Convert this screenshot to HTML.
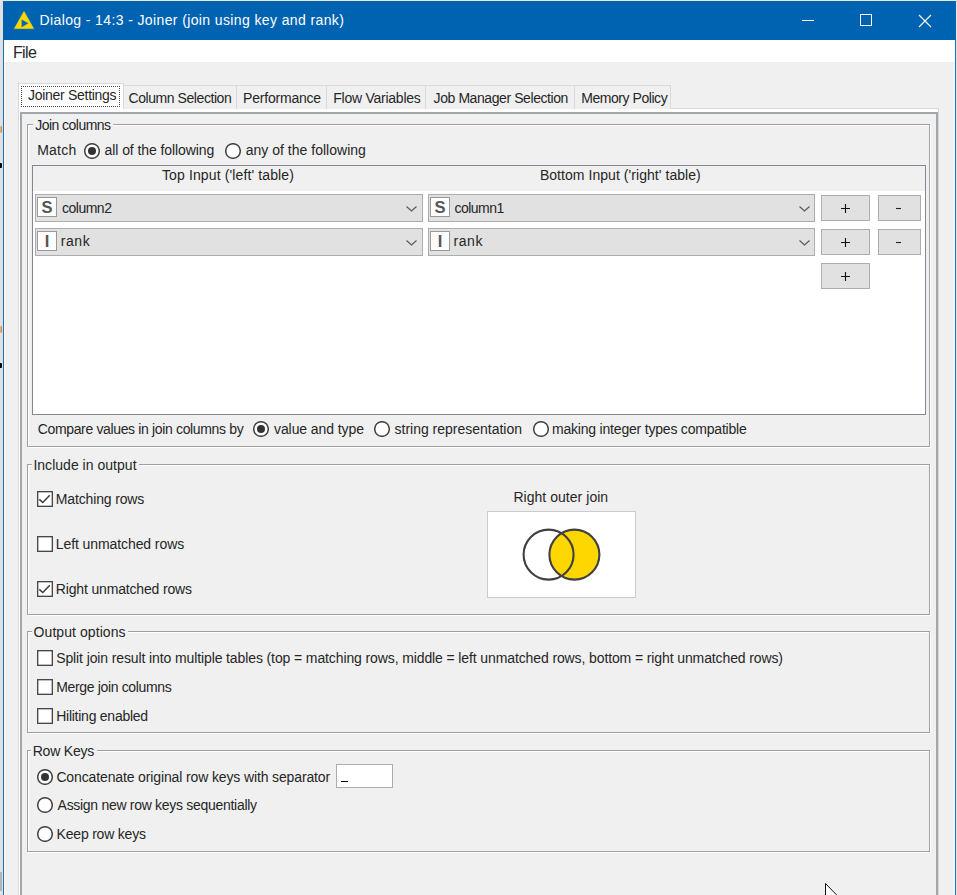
<!DOCTYPE html>
<html><head><meta charset="utf-8">
<style>
*{box-sizing:border-box;margin:0;padding:0}
html,body{width:957px;height:895px;overflow:hidden;background:#f0f0f0;font-family:"Liberation Sans",sans-serif;color:#000}
.a{position:absolute}
.t{position:absolute;white-space:pre;font-size:13.5px;line-height:16px;color:#262626;z-index:5}
#desk{left:0;top:0;width:957px;height:895px;background:#e2e2e2}
#win{left:3px;top:0;width:953px;height:895px;background:#f0f0f0;border-left:1px solid #1a6fba;border-right:1px solid #1a6fba}
#title{left:3px;top:1px;width:953px;height:39px;background:#0063b1}
#menu{left:4px;top:40px;width:951px;height:22px;background:#fff}
.tab{position:absolute;top:85px;height:24px;border:1px solid #d9d9d9;border-bottom:none;background:#f0f0f0}
.tabsel{top:83px;height:26px;background:#fff;z-index:2}
#tabc{left:18px;top:108px;width:921px;height:800px;border:1px solid #d9d9d9;background:#fff}
#inner{left:20px;top:112px;width:918px;height:800px;border:2px solid #a3a7ad;background:#f0f0f0}
.grpw{position:absolute;border:1px solid #fff}
.grp{position:absolute;border:1px solid #a0a0a0}
.gl{position:absolute;background:#f0f0f0;height:4px;z-index:1}
.radio{position:absolute;width:16px;height:16px;border-radius:50%;border:1.3px solid #333;background:#fff}
.radio.on::after{content:"";position:absolute;left:3.2px;top:3.2px;width:7px;height:7px;border-radius:50%;background:#333}
.cb{position:absolute;width:16px;height:16px;border:1.3px solid #333;background:#fff}
.combo{position:absolute;height:28px;border:1px solid #adadad;background:#e1e1e1}
.ticon{position:absolute;left:1px;top:2px;width:20px;height:20px;border:1px solid #999;background:#fff;font-weight:bold;font-size:16.5px;line-height:19px;text-align:center;color:#555}
.chev{position:absolute;top:11px;width:11px;height:6px}
.btn{position:absolute;width:49px;height:26px;border:1px solid #adadad;background:#e1e1e1;text-align:center;font-size:15px;line-height:24px;color:#000}
</style></head><body>
<div id="desk" class="a"></div>
<div id="win" class="a"></div>
<div class="a" style="left:0;top:126px;width:3px;height:7px;background:linear-gradient(90deg,#e8c9a0,#c08040 60%,#402010);border-radius:0 4px 4px 0"></div>
<div class="a" style="left:0;top:163px;width:3px;height:5px;background:#000;border-radius:0 3px 3px 0"></div>
<div class="a" style="left:0;top:326px;width:3px;height:7px;background:linear-gradient(90deg,#e8c9a0,#c08040 60%,#402010);border-radius:0 4px 4px 0"></div>
<div class="a" style="left:0;top:363px;width:3px;height:5px;background:#000;border-radius:0 3px 3px 0"></div>
<div class="a" style="left:0;top:872px;width:3px;height:19px;background:#b4b4b4"></div>
<div class="a" style="left:0;top:0;width:957px;height:1px;background:#efe8e1"></div>
<div class="a" style="left:2px;top:0;width:1px;height:895px;background:#e2ddd8"></div>
<div class="a" style="left:956px;top:0;width:1px;height:895px;background:#ece6e0"></div>
<div class="a" style="left:4px;top:40px;width:1px;height:855px;background:#fcfaf8"></div>
<div class="a" style="left:954px;top:40px;width:1px;height:855px;background:#fcfaf8"></div>
<div id="title" class="a"></div>
<div id="menu" class="a"></div>
<svg class="a" style="left:12px;top:9px" width="24" height="22" viewBox="0 0 24 22"><polygon points="12,2.6 21.6,19.6 2.4,19.6" fill="#ffd700" stroke="#ffd700" stroke-width="0.6" stroke-linejoin="round"/><polygon points="9.6,10.4 16.4,14.3 9.6,18.2" fill="#0063b1"/></svg>
<svg class="a" style="left:795px;top:8px" width="150" height="24" viewBox="0 0 150 24"><line x1="7" y1="12.5" x2="19" y2="12.5" stroke="#fff" stroke-width="1"/><rect x="65.5" y="6.5" width="11" height="11" fill="none" stroke="#fff" stroke-width="1"/><path d="M124,7 L136,19 M136,7 L124,19" stroke="#fff" stroke-width="1.1"/></svg>

<!-- tabs -->
<div id="tabc" class="a"></div>
<div class="tab" style="left:123px;width:114px"></div>
<div class="tab" style="left:236px;width:91px"></div>
<div class="tab" style="left:326px;width:100px"></div>
<div class="tab" style="left:425px;width:150px"></div>
<div class="tab" style="left:574px;width:97px"></div>
<div class="tab tabsel" style="left:18px;width:106px"></div>
<div class="a" style="left:21px;top:86px;width:99px;height:21px;border:1px dotted #4a4a4a;z-index:3"></div>
<div id="inner" class="a"></div>

<!-- group 1 -->
<div class="grpw" style="left:28px;top:125px;width:903px;height:323px"></div><div class="grp" style="left:27px;top:124px;width:903px;height:323px"></div>
<div class="gl" style="left:33px;top:122px;width:80px"></div>
<div class="a" style="left:84px;top:143px"><svg width="16" height="16" viewBox="0 0 16 16"><circle cx="8" cy="8" r="7.3" fill="#fff" stroke="#444" stroke-width="1.5"/><circle cx="8" cy="8" r="4" fill="#333"/></svg></div>
<div class="a" style="left:225px;top:143px"><svg width="16" height="16" viewBox="0 0 16 16"><circle cx="8" cy="8" r="7.3" fill="#fff" stroke="#444" stroke-width="1.5"/></svg></div>
<div class="a" style="left:32px;top:165px;width:894px;height:250px;border:1px solid #828790;background:#fff"></div>
<div class="a" style="left:33px;top:166px;width:892px;height:25px;background:#f0f0f0"></div>

<div class="combo" style="left:35px;top:194px;width:388px"><div class="ticon">S</div><svg class="chev" style="left:370px" viewBox="0 0 11 6" width="11" height="6"><path d="M0.5,0.5 L5.5,5 L10.5,0.5" fill="none" stroke="#555" stroke-width="1.05"/></svg></div>
<div class="combo" style="left:428px;top:194px;width:387px"><div class="ticon">S</div><svg class="chev" style="left:370px" viewBox="0 0 11 6" width="11" height="6"><path d="M0.5,0.5 L5.5,5 L10.5,0.5" fill="none" stroke="#555" stroke-width="1.05"/></svg></div>
<div class="combo" style="left:35px;top:228px;width:388px"><div class="ticon">I</div><svg class="chev" style="left:370px" viewBox="0 0 11 6" width="11" height="6"><path d="M0.5,0.5 L5.5,5 L10.5,0.5" fill="none" stroke="#555" stroke-width="1.05"/></svg></div>
<div class="combo" style="left:428px;top:228px;width:387px"><div class="ticon">I</div><svg class="chev" style="left:370px" viewBox="0 0 11 6" width="11" height="6"><path d="M0.5,0.5 L5.5,5 L10.5,0.5" fill="none" stroke="#555" stroke-width="1.05"/></svg></div>
<div class="btn" style="left:821px;top:195px"><svg class="a" style="left:0;top:0" width="48" height="25"><path d="M19,12.5 H28 M23.5,8 V17" stroke="#111" stroke-width="1.1"/></svg></div>
<div class="btn" style="left:878px;top:195px;width:43px"><svg class="a" style="left:0;top:0" width="42" height="25"><path d="M17,12.5 H22" stroke="#222" stroke-width="1.1"/></svg></div>
<div class="btn" style="left:821px;top:229px"><svg class="a" style="left:0;top:0" width="48" height="25"><path d="M19,12.5 H28 M23.5,8 V17" stroke="#111" stroke-width="1.1"/></svg></div>
<div class="btn" style="left:878px;top:229px;width:43px"><svg class="a" style="left:0;top:0" width="42" height="25"><path d="M17,12.5 H22" stroke="#222" stroke-width="1.1"/></svg></div>
<div class="btn" style="left:821px;top:263px"><svg class="a" style="left:0;top:0" width="48" height="25"><path d="M19,12.5 H28 M23.5,8 V17" stroke="#111" stroke-width="1.1"/></svg></div>

<div class="a" style="left:253px;top:421px"><svg width="16" height="16" viewBox="0 0 16 16"><circle cx="8" cy="8" r="7.3" fill="#fff" stroke="#444" stroke-width="1.5"/><circle cx="8" cy="8" r="4" fill="#333"/></svg></div>
<div class="a" style="left:374px;top:421px"><svg width="16" height="16" viewBox="0 0 16 16"><circle cx="8" cy="8" r="7.3" fill="#fff" stroke="#444" stroke-width="1.5"/></svg></div>
<div class="a" style="left:533px;top:421px"><svg width="16" height="16" viewBox="0 0 16 16"><circle cx="8" cy="8" r="7.3" fill="#fff" stroke="#444" stroke-width="1.5"/></svg></div>

<!-- group 2 -->
<div class="grpw" style="left:28px;top:465px;width:903px;height:151px"></div><div class="grp" style="left:27px;top:464px;width:903px;height:151px"></div>
<div class="gl" style="left:32px;top:462px;width:107px"></div>
<div class="a" style="left:37px;top:491px"><svg width="16" height="16" viewBox="0 0 16 16"><rect x="0.65" y="0.65" width="14.7" height="14.7" fill="#fff" stroke="#474747" stroke-width="1.4"/><path d="M2.3,8.3 L5.8,11.5 L12.8,4.3" fill="none" stroke="#404040" stroke-width="1.6"/></svg></div>
<div class="a" style="left:37px;top:536px"><svg width="16" height="16" viewBox="0 0 16 16"><rect x="0.65" y="0.65" width="14.7" height="14.7" fill="#fff" stroke="#474747" stroke-width="1.4"/></svg></div>
<div class="a" style="left:37px;top:581px"><svg width="16" height="16" viewBox="0 0 16 16"><rect x="0.65" y="0.65" width="14.7" height="14.7" fill="#fff" stroke="#474747" stroke-width="1.4"/><path d="M2.3,8.3 L5.8,11.5 L12.8,4.3" fill="none" stroke="#404040" stroke-width="1.6"/></svg></div>
<div class="a" style="left:487px;top:511px;width:149px;height:87px;border:1px solid #c8ccd0;background:#fff"><svg class="a" style="left:0;top:0" width="147" height="85" viewBox="0 0 147 85"><circle cx="86.4" cy="42.6" r="25" fill="#ffd700" stroke="#404040" stroke-width="2.1"/><circle cx="60.6" cy="42.6" r="25" fill="none" stroke="#404040" stroke-width="2.1"/></svg></div>

<!-- group 3 -->
<div class="grpw" style="left:28px;top:632px;width:903px;height:102px"></div><div class="grp" style="left:27px;top:631px;width:903px;height:102px"></div>
<div class="gl" style="left:32px;top:629px;width:96px"></div>
<div class="a" style="left:37px;top:650px"><svg width="16" height="16" viewBox="0 0 16 16"><rect x="0.65" y="0.65" width="14.7" height="14.7" fill="#fff" stroke="#474747" stroke-width="1.4"/></svg></div>
<div class="a" style="left:37px;top:679px"><svg width="16" height="16" viewBox="0 0 16 16"><rect x="0.65" y="0.65" width="14.7" height="14.7" fill="#fff" stroke="#474747" stroke-width="1.4"/></svg></div>
<div class="a" style="left:37px;top:708px"><svg width="16" height="16" viewBox="0 0 16 16"><rect x="0.65" y="0.65" width="14.7" height="14.7" fill="#fff" stroke="#474747" stroke-width="1.4"/></svg></div>

<!-- group 4 -->
<div class="grpw" style="left:28px;top:751px;width:903px;height:102px"></div><div class="grp" style="left:27px;top:750px;width:903px;height:102px"></div>
<div class="gl" style="left:31px;top:748px;width:66px"></div>
<div class="a" style="left:37px;top:769px"><svg width="16" height="16" viewBox="0 0 16 16"><circle cx="8" cy="8" r="7.3" fill="#fff" stroke="#444" stroke-width="1.5"/><circle cx="8" cy="8" r="4" fill="#333"/></svg></div>
<div class="a" style="left:37px;top:797px"><svg width="16" height="16" viewBox="0 0 16 16"><circle cx="8" cy="8" r="7.3" fill="#fff" stroke="#444" stroke-width="1.5"/></svg></div>
<div class="a" style="left:37px;top:826px"><svg width="16" height="16" viewBox="0 0 16 16"><circle cx="8" cy="8" r="7.3" fill="#fff" stroke="#444" stroke-width="1.5"/></svg></div>
<div class="a" style="left:336px;top:764px;width:57px;height:24px;border:1px solid #abadb3;background:#fff"><div class="a" style="left:4px;top:16px;width:7px;height:1px;background:#000"></div></div>

<svg class="a" style="left:825px;top:883px;z-index:9" width="14" height="14" viewBox="0 0 14 14"><path d="M0.5,0.5 L0.5,17 L4,13.5 L6.4,19 L8.4,18 L6,13 L12.6,13 Z" fill="#fff" stroke="#111" stroke-width="1"/></svg>
<div class="t" style="left:39.5px;top:12px;font-size:14px;letter-spacing:0.383px;color:#fff">Dialog - 14:3 - Joiner (join using key and rank)</div>
<div class="t" style="left:13px;top:45px;font-size:16px;letter-spacing:-0.667px;">File</div>
<div class="t" style="left:28px;top:87px;font-size:14px;letter-spacing:-0.286px;z-index:4">Joiner Settings</div>
<div class="t" style="left:128.5px;top:90px;font-size:14px;letter-spacing:-0.433px;">Column Selection</div>
<div class="t" style="left:243px;top:90px;font-size:14px;letter-spacing:-0.2px;">Performance</div>
<div class="t" style="left:333.3px;top:90px;font-size:14px;letter-spacing:-0.254px;">Flow Variables</div>
<div class="t" style="left:433.6px;top:90px;font-size:14px;letter-spacing:-0.42px;">Job Manager Selection</div>
<div class="t" style="left:581.2px;top:90px;font-size:14px;letter-spacing:-0.442px;">Memory Policy</div>
<div class="t" style="left:35.2px;top:117px;font-size:14px;letter-spacing:-0.527px;">Join columns</div>
<div class="t" style="left:37.2px;top:142px;font-size:14px;letter-spacing:0.225px;">Match</div>
<div class="t" style="left:104.6px;top:142px;font-size:14px;letter-spacing:-0.084px;">all of the following</div>
<div class="t" style="left:245.7px;top:142px;font-size:14px;letter-spacing:0.016px;">any of the following</div>
<div class="t" style="left:162px;top:167px;font-size:14px;letter-spacing:0.122px;">Top Input (&#x27;left&#x27; table)</div>
<div class="t" style="left:539.9px;top:167px;font-size:14px;letter-spacing:0.052px;">Bottom Input (&#x27;right&#x27; table)</div>
<div class="t" style="left:62px;top:200px;font-size:14px;letter-spacing:-0.5px;">column2</div>
<div class="t" style="left:60.7px;top:233px;font-size:14px;letter-spacing:0.6px;">rank</div>
<div class="t" style="left:454.4px;top:200px;font-size:14px;letter-spacing:-0.5px;">column1</div>
<div class="t" style="left:453.4px;top:233px;font-size:14px;letter-spacing:0.6px;">rank</div>
<div class="t" style="left:37.7px;top:421px;font-size:14px;letter-spacing:-0.347px;">Compare values in join columns by</div>
<div class="t" style="left:274px;top:421px;font-size:14px;letter-spacing:-0.085px;">value and type</div>
<div class="t" style="left:394.5px;top:421px;font-size:14px;letter-spacing:-0.005px;">string representation</div>
<div class="t" style="left:552px;top:421px;font-size:14px;letter-spacing:-0.2px;">making integer types compatible</div>
<div class="t" style="left:33.4px;top:457px;font-size:14px;letter-spacing:0.025px;">Include in output</div>
<div class="t" style="left:55.8px;top:491px;font-size:14px;letter-spacing:-0.15px;">Matching rows</div>
<div class="t" style="left:55.8px;top:536px;font-size:14px;letter-spacing:-0.089px;">Left unmatched rows</div>
<div class="t" style="left:55.8px;top:581px;font-size:14px;letter-spacing:-0.163px;">Right unmatched rows</div>
<div class="t" style="left:513.4px;top:489px;font-size:14px;letter-spacing:0.04px;">Right outer join</div>
<div class="t" style="left:33.6px;top:624px;font-size:14px;letter-spacing:0.069px;">Output options</div>
<div class="t" style="left:56.2px;top:650px;font-size:14px;letter-spacing:-0.113px;">Split join result into multiple tables (top = matching rows, middle = left unmatched rows, bottom = right unmatched rows)</div>
<div class="t" style="left:56.2px;top:679px;font-size:14px;letter-spacing:-0.341px;">Merge join columns</div>
<div class="t" style="left:56.2px;top:708px;font-size:14px;letter-spacing:-0.253px;">Hiliting enabled</div>
<div class="t" style="left:32.7px;top:743px;font-size:14px;letter-spacing:-0.2px;">Row Keys</div>
<div class="t" style="left:56.4px;top:769px;font-size:14px;letter-spacing:-0.13px;">Concatenate original row keys with separator</div>
<div class="t" style="left:57.6px;top:797px;font-size:14px;letter-spacing:-0.294px;">Assign new row keys sequentially</div>
<div class="t" style="left:56.6px;top:826px;font-size:14px;letter-spacing:-0.208px;">Keep row keys</div>
</body></html>
